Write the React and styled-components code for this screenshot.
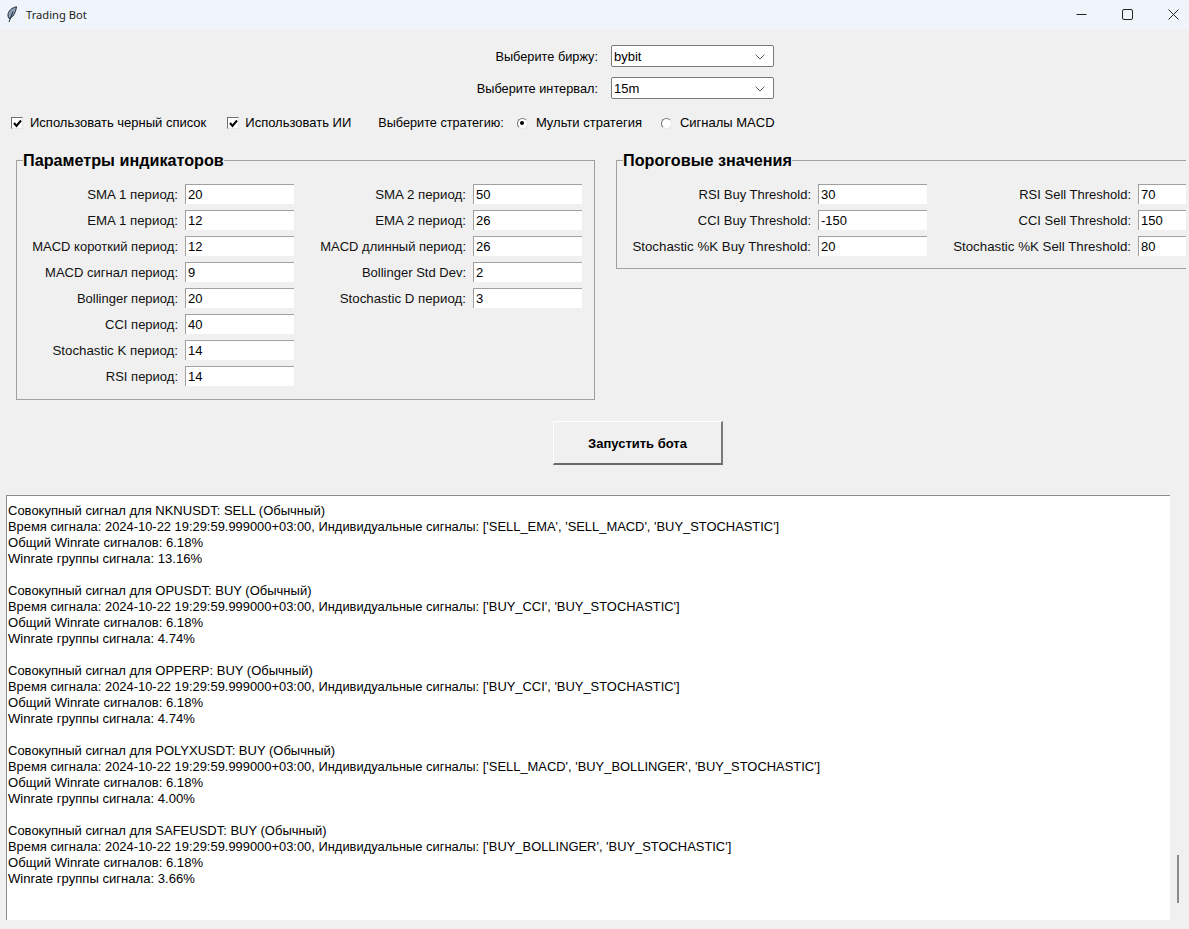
import React from "react";
import styled, { createGlobalStyle } from "styled-components";

const Global = createGlobalStyle`
  html, body { margin: 0; padding: 0; background: #f0f0f0; overflow: hidden; }
  * { box-sizing: border-box; }
`;

const Window = styled.div`
  width: 1189px;
  height: 929px;
  overflow: hidden;
  background: #f0f0f0;
  color: #000;
  font-family: "Liberation Sans", Arial, sans-serif;
  font-size: 13px;
  line-height: 16px;
  display: flex;
  flex-direction: column;
`;

const TitleBar = styled.header`
  height: 29px;
  flex: none;
  background: #f0f5fb;
  display: flex;
  align-items: center;
  padding-left: 6px;
`;
const TitleText = styled.span`
  font-family: "Noto Sans", sans-serif;
  font-size: 11.2px;
  color: #222;
  margin-left: 8px;
  flex: 1;
`;
const WinControls = styled.div`
  display: flex;
  margin-right: -7px;
`;
const WinButton = styled.div`
  width: 46px;
  height: 29px;
  display: flex;
  align-items: center;
  justify-content: center;
  color: #222;
`;

const Selectors = styled.section`
  display: grid;
  grid-template-columns: 598px 163px;
  grid-auto-rows: 22px;
  column-gap: 13px;
  row-gap: 10px;
  padding-top: 16px;
`;
const SelectLabel = styled.label`
  text-align: right;
  font-size: 12.75px;
  line-height: 24px;
`;
const Select = styled.div`
  height: 22px;
  border: 1px solid #7a7a7a;
  border-radius: 2px;
  background: #fff;
  padding: 1px 8px 0 2px;
  display: flex;
  align-items: center;
  justify-content: space-between;
`;

const Options = styled.section`
  display: flex;
  align-items: center;
  height: 16px;
  margin-top: 16px;
  padding-left: 11px;
`;
const Option = styled.label`
  display: flex;
  align-items: center;
  gap: ${p => p.$gap}px;
  margin-left: ${p => p.$left || 0}px;
  white-space: nowrap;
`;
const OptionCaption = styled.span`
  margin-left: ${p => p.$left || 0}px;
  white-space: nowrap;
  font-size: 12.7px;
`;
const CheckBox = styled.span`
  width: 12px;
  height: 12px;
  flex: none;
  background: #fff;
  border-top: 1px solid #6e6e6e;
  border-left: 1px solid #6e6e6e;
  border-right: 1px solid #e4e4e4;
  border-bottom: 1px solid #e4e4e4;
  display: flex;
  align-items: center;
  justify-content: center;
`;
const Radio = styled.span`
  width: 11px;
  height: 11px;
  flex: none;
  border-radius: 50%;
  background: #fff;
  border: 1px solid;
  border-color: #777 #e8e8e8 #e8e8e8 #777;
  display: flex;
  align-items: center;
  justify-content: center;
`;
const RadioDot = styled.span`
  width: 4px;
  height: 4px;
  border-radius: 50%;
  background: #000;
`;

const Groups = styled.section`
  display: flex;
  align-items: flex-start;
  gap: 21px;
  padding-left: 16px;
  margin-top: 19px;
`;
const Group = styled.fieldset`
  margin: 0;
  min-width: 0;
  width: ${p => p.$width}px;
  height: ${p => p.$height}px;
  padding: 14px 0 0 0;
  border: 1px solid #a0a0a0;
  border-right-width: ${p => (p.$open ? 0 : 1)}px;
  overflow: hidden;
`;
const Legend = styled.legend`
  margin-left: 6px;
  padding: 0;
  font-size: 16.2px;
  line-height: 20px;
  font-weight: bold;
  color: #000;
`;
const Params = styled.div`
  display: grid;
  grid-template-columns: ${p => p.$columns};
  grid-auto-rows: 20px;
  row-gap: 6px;
`;
const ParamLabel = styled.label`
  text-align: right;
  padding-right: 7px;
  line-height: 22px;
  font-size: ${p => (p.$wide ? 13.3 : 13)}px;
  white-space: nowrap;
  color: #111;
  grid-column: ${p => p.$col};
  grid-row: ${p => p.$row};
`;
const ParamInput = styled.input`
  width: 100%;
  height: 20px;
  border: none;
  border-top: 1px solid #a0a0a0;
  border-left: 1px solid #a0a0a0;
  background: #fff;
  padding: 0 0 0 2px;
  margin: 0;
  outline: none;
  font: inherit;
  color: #000;
  grid-column: ${p => p.$col};
  grid-row: ${p => p.$row};
`;

const ActionRow = styled.section`
  padding-left: 553px;
  margin-top: 21px;
`;
const StartButton = styled.button`
  width: 170px;
  height: 44px;
  background: #f0f0f0;
  border: none;
  border-top: 1px solid #fff;
  border-left: 1px solid #fff;
  border-right: 2px solid #7a7a7a;
  border-bottom: 2px solid #6a6a6a;
  font: bold 13px "Liberation Sans", Arial, sans-serif;
  color: #000;
  padding: 1px 0 0;
`;

const LogRow = styled.section`
  display: flex;
  height: 425px;
  margin-top: 30px;
  padding-left: 6px;
`;
const Log = styled.div`
  width: 1164px;
  height: 425px;
  background: #fff;
  border-top: 1px solid #8c8c8c;
  border-left: 1px solid #8c8c8c;
  padding: 7px 0 0 1px;
  overflow: hidden;
`;
const LogEntry = styled.div`
  margin-bottom: 16px;
`;
const LogLine = styled.div`
  white-space: nowrap;
  height: 16px;
  font-size: ${p => p.$size}px;
`;
const ScrollTrack = styled.div`
  width: 16px;
  padding: 360px 0 0 7px;
`;
const ScrollThumb = styled.div`
  width: 2px;
  height: 48px;
  background: #8a8a8a;
`;

const Feather = () => (
  <svg width="12" height="18" viewBox="0 0 12 18" fill="none">
    <path d="M10.5 0.8 C6 1.5 2 5 2 9 C2 10.5 2.5 12 3 12.5 C6.5 12 9.5 7.5 10.5 0.8 Z" fill="#8ea0b5" stroke="#1f2b38" strokeWidth="1" />
    <path d="M7 5.5 L3 16" stroke="#1d2730" strokeWidth="1" />
  </svg>
);
const Chevron = () => (
  <svg width="10" height="6" viewBox="0 0 10 6" fill="none">
    <path d="M0.5 0.5 L5 5 L9.5 0.5" stroke="#666" strokeWidth="1" />
  </svg>
);
const Tick = () => (
  <svg width="9" height="9" viewBox="0 0 9 9" fill="none">
    <path d="M1 4 L3.5 7 L8 1.5" stroke="#000" strokeWidth="2" />
  </svg>
);

const leftParams = [
  ["SMA 1 период:", "20", "SMA 2 период:", "50"],
  ["EMA 1 период:", "12", "EMA 2 период:", "26"],
  ["MACD короткий период:", "12", "MACD длинный период:", "26"],
  ["MACD сигнал период:", "9", "Bollinger Std Dev:", "2"],
  ["Bollinger период:", "20", "Stochastic D период:", "3"],
  ["CCI период:", "40"],
  ["Stochastic K период:", "14"],
  ["RSI период:", "14"],
];
const rightParams = [
  ["RSI Buy Threshold:", "30", "RSI Sell Threshold:", "70"],
  ["CCI Buy Threshold:", "-150", "CCI Sell Threshold:", "150"],
  ["Stochastic %K Buy Threshold:", "20", "Stochastic %K Sell Threshold:", "80"],
];
const time = "Время сигнала: 2024-10-22 19:29:59.999000+03:00, Индивидуальные сигналы: ";
const logs = [
  ["Совокупный сигнал для NKNUSDT: SELL (Обычный)", "['SELL_EMA', 'SELL_MACD', 'BUY_STOCHASTIC']", "13.16%"],
  ["Совокупный сигнал для OPUSDT: BUY (Обычный)", "['BUY_CCI', 'BUY_STOCHASTIC']", "4.74%"],
  ["Совокупный сигнал для OPPERP: BUY (Обычный)", "['BUY_CCI', 'BUY_STOCHASTIC']", "4.74%"],
  ["Совокупный сигнал для POLYXUSDT: BUY (Обычный)", "['SELL_MACD', 'BUY_BOLLINGER', 'BUY_STOCHASTIC']", "4.00%"],
  ["Совокупный сигнал для SAFEUSDT: BUY (Обычный)", "['BUY_BOLLINGER', 'BUY_STOCHASTIC']", "3.66%"],
];

const isWide = text => /^(SMA|EMA|Stochastic)/.test(text);

const ParamGrid = ({ rows, columns }) => (
  <Params $columns={columns}>
    {rows.map((r, i) => (
      <React.Fragment key={i}>
        <ParamLabel $col={1} $row={i + 1} $wide={isWide(r[0])}>{r[0]}</ParamLabel>
        <ParamInput $col={2} $row={i + 1} readOnly value={r[1]} />
        {r[2] && <ParamLabel $col={3} $row={i + 1} $wide={isWide(r[2])}>{r[2]}</ParamLabel>}
        {r[2] && <ParamInput $col={4} $row={i + 1} readOnly value={r[3]} />}
      </React.Fragment>
    ))}
  </Params>
);

export default function App() {
  return (
    <Window>
      <Global />
      <TitleBar>
        <Feather />
        <TitleText>Trading Bot</TitleText>
        <WinControls>
          <WinButton>
            <svg width="11" height="11" viewBox="0 0 11 11"><path d="M0.5 5.5 H10.5" stroke="#222" strokeWidth="1" /></svg>
          </WinButton>
          <WinButton>
            <svg width="11" height="11" viewBox="0 0 11 11" fill="none"><rect x="0.5" y="0.5" width="10" height="10" rx="1.5" stroke="#222" /></svg>
          </WinButton>
          <WinButton>
            <svg width="11" height="11" viewBox="0 0 11 11" fill="none"><path d="M0.5 0.5 L10.5 10.5 M10.5 0.5 L0.5 10.5" stroke="#222" /></svg>
          </WinButton>
        </WinControls>
      </TitleBar>

      <Selectors>
        <SelectLabel>Выберите биржу:</SelectLabel>
        <Select>bybit<Chevron /></Select>
        <SelectLabel>Выберите интервал:</SelectLabel>
        <Select>15m<Chevron /></Select>
      </Selectors>

      <Options>
        <Option $gap={7}><CheckBox><Tick /></CheckBox>Использовать черный список</Option>
        <Option $gap={6} $left={21}><CheckBox><Tick /></CheckBox>Использовать ИИ</Option>
        <OptionCaption $left={27}>Выберите стратегию:</OptionCaption>
        <Option $gap={8} $left={13}><Radio><RadioDot /></Radio>Мульти стратегия</Option>
        <Option $gap={8} $left={19}><Radio />Сигналы MACD</Option>
      </Options>

      <Groups>
        <Group $width={579} $height={250}>
          <Legend>Параметры индикаторов</Legend>
          <ParamGrid rows={leftParams} columns="168px 109px 179px 109px" />
        </Group>
        <Group $width={570} $height={119} $open>
          <Legend>Пороговые значения</Legend>
          <ParamGrid rows={rightParams} columns="201px 109px 211px 48px" />
        </Group>
      </Groups>

      <ActionRow>
        <StartButton>Запустить бота</StartButton>
      </ActionRow>

      <LogRow>
        <Log>
          {logs.map(([title, signals, rate]) => (
            <LogEntry key={title}>
              <LogLine $size={13}>{title}</LogLine>
              <LogLine $size={12.92}>{time}{signals}</LogLine>
              <LogLine $size={13.1}>Общий Winrate сигналов: 6.18%</LogLine>
              <LogLine $size={13.1}>Winrate группы сигнала: {rate}</LogLine>
            </LogEntry>
          ))}
        </Log>
        <ScrollTrack><ScrollThumb /></ScrollTrack>
      </LogRow>
    </Window>
  );
}
